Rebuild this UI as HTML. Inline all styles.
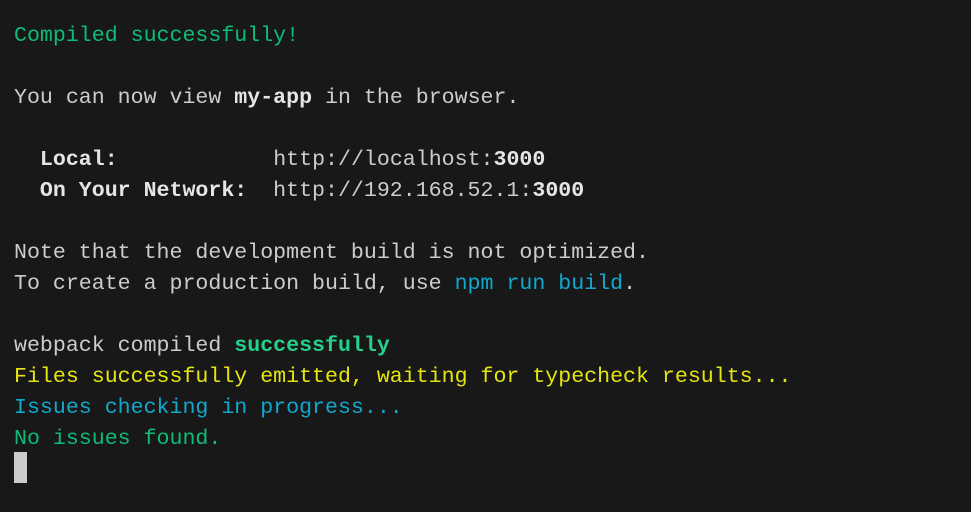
<!DOCTYPE html>
<html><head><meta charset="utf-8"><style>
html,body{margin:0;padding:0;background:#181818;width:971px;height:512px;overflow:hidden}
pre{margin:0;position:absolute;left:14px;top:21px;font-family:"Liberation Mono",monospace;font-size:21.6px;line-height:31px;color:#cccccc}
b{font-weight:bold;color:#e5e5e5}
.g{color:#0dbc79}.bg{color:#23d18b;font-weight:bold}.y{color:#e5e510}.c{color:#11a8cd}
.cur{position:absolute;left:14px;top:452px;width:13px;height:31px;background:#cccccc}
</style></head><body>
<pre><span class="g">Compiled successfully!</span>

You can now view <b>my-app</b> in the browser.

  <b>Local:</b>            http://localhost:<b>3000</b>
  <b>On Your Network:</b>  http://192.168.52.1:<b>3000</b>

Note that the development build is not optimized.
To create a production build, use <span class="c">npm run build</span>.

webpack compiled <span class="bg">successfully</span>
<span class="y">Files successfully emitted, waiting for typecheck results...</span>
<span class="c">Issues checking in progress...</span>
<span class="g">No issues found.</span></pre>
<div class="cur"></div>
</body></html>
